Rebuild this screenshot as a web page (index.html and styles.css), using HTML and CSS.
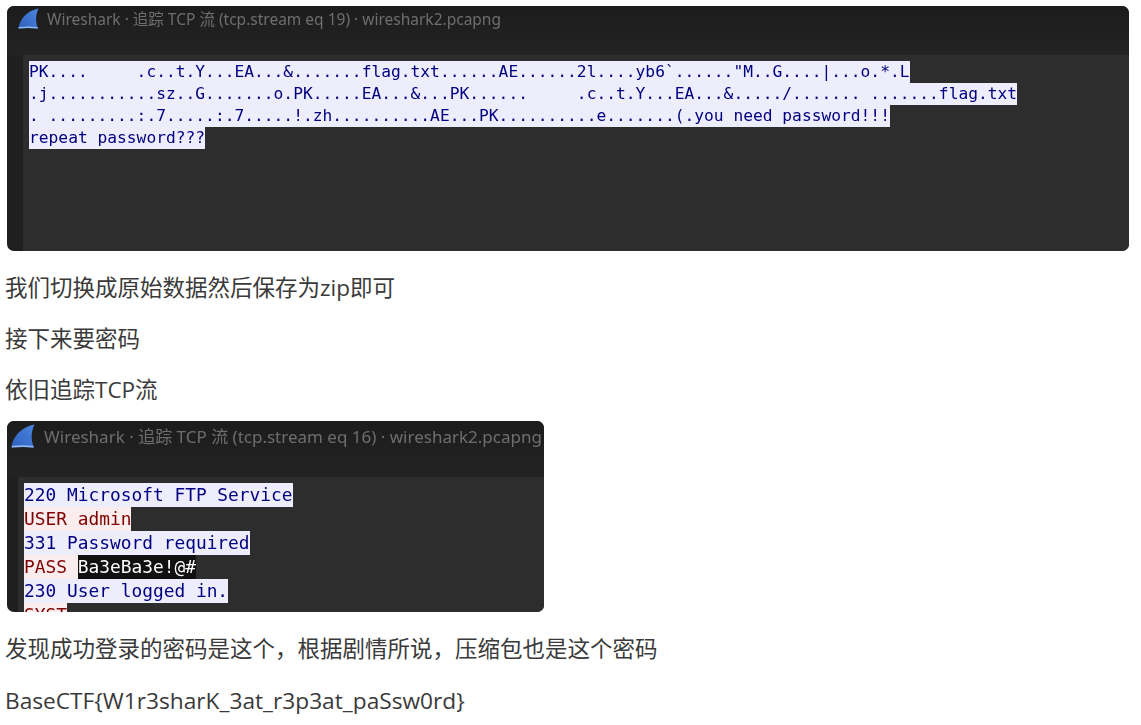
FILE: index.html
```html
<!DOCTYPE html>
<html lang="zh-CN">
<head>
<meta charset="utf-8">
<title>BaseCTF</title>
<link rel="stylesheet" href="styles.css">
</head>
<body>
<article class="post">
  <figure class="window window-wide">
    <div class="titlebar">
      <svg class="fin" viewBox="0 0 22 22" aria-hidden="true">
        <defs>
          <linearGradient id="fin-a" x1="0" y1="1" x2="1" y2="0">
            <stop offset="0" stop-color="#2f5fbe"/>
            <stop offset="1" stop-color="#4a86df"/>
          </linearGradient>
        </defs>
        <path d="M0.5 21.5C1.5 12 9 3 21.5 0.5 18.5 7 18 14 21 21.5 14 20.8 7 20.8 0.5 21.5Z" fill="url(#fin-a)"/>
        <path d="M0.5 21.5C7 20.8 14 20.8 21 21.5L20.4 20C14 19.2 7 19.2 0.8 20Z" fill="#8fb8ee"/>
      </svg>
      <span class="title">Wireshark · 追踪 TCP 流 (tcp.stream eq 19) · wireshark2.pcapng</span>
    </div>
    <div class="pane">
      <div class="stream">
<span class="line srv">PK....     .c..t.Y...EA...&amp;.......flag.txt......AE......2l....yb6`......"M..G....|...o.*.L</span>
<span class="line srv">.j...........sz..G.......o.PK.....EA...&amp;...PK......     .c..t.Y...EA...&amp;...../....... .......flag.txt</span>
<span class="line srv">. .........:.7.....:.7.....!.zh..........AE...PK..........e.......(.you need password!!!</span>
<span class="line srv">repeat password???</span>
      </div>
    </div>
  </figure>

  <p class="para">我们切换成原始数据然后保存为zip即可</p>
  <p class="para">接下来要密码</p>
  <p class="para">依旧追踪TCP流</p>

  <figure class="window window-small">
    <div class="titlebar">
      <svg class="fin" viewBox="0 0 22 22" aria-hidden="true">
        <path d="M0.5 21.5C1.5 12 9 3 21.5 0.5 18.5 7 18 14 21 21.5 14 20.8 7 20.8 0.5 21.5Z" fill="url(#fin-a)"/>
        <path d="M0.5 21.5C7 20.8 14 20.8 21 21.5L20.4 20C14 19.2 7 19.2 0.8 20Z" fill="#8fb8ee"/>
      </svg>
      <span class="title">Wireshark · 追踪 TCP 流 (tcp.stream eq 16) · wireshark2.pcapng</span>
    </div>
    <div class="pane">
      <div class="stream">
<span class="line srv">220 Microsoft FTP Service</span>
<span class="line cli">USER admin</span>
<span class="line srv">331 Password required</span>
<span class="line cli">PASS <mark class="secret">Ba3eBa3e!@#</mark></span>
<span class="line srv">230 User logged in.</span>
<span class="line cli">SYST</span>
      </div>
    </div>
  </figure>

  <p class="para para-after">发现成功登录的密码是这个，根据剧情所说，压缩包也是这个密码</p>
  <p class="para para-latin">BaseCTF{W1r3sharK_3at_r3p3at_paSsw0rd}</p>
</article>
</body>
</html>
```

FILE: styles.css
```css
* { box-sizing: border-box; }

html, body {
  margin: 0;
  padding: 0;
  background: #ffffff;
}

body {
  width: 1141px;
  height: 725px;
  overflow: hidden;
}

.post {
  padding: 6px 12px 0 5px;
  font-family: "Open Sans", "Noto Sans CJK SC", sans-serif;
  color: #3a3a3a;
}

.window {
  margin: 0 0 0 2px;
  overflow: hidden;
  border-radius: 7px;
  background: #1f1f1f;
  display: flex;
  flex-direction: column;
  filter: blur(0.3px);
}

.window-wide { width: 1122px; height: 245px; }
.window-small { width: 537px; height: 191px; margin-top: 17px; }

.titlebar {
  display: flex;
  align-items: flex-start;
  flex: none;
  background: linear-gradient(#1c1c1c, #232323);
}

.window-wide .titlebar { height: 49px; padding: 2px 0 0 11px; gap: 8px; }
.window-small .titlebar { height: 56px; padding: 3px 0 0 4px; gap: 9px; }

.fin { flex: none; }
.window-wide .fin { width: 21px; height: 21px; }
.window-small .fin { width: 24px; height: 24px; }

.title {
  color: #6e6e6e;
  font-family: "Noto Sans", "Noto Sans CJK SC", sans-serif;
  white-space: nowrap;
}

.window-wide .title { font-size: 15.5px; line-height: 22px; }
.window-small .title { font-size: 17px; line-height: 24px; padding-top: 1px; }

.pane {
  flex: 1;
  min-height: 0;
  background: #2d2d2d;
}

.window-wide .pane { margin-left: 16px; padding: 6px 0 0 6px; }
.window-small .pane { margin-left: 11px; padding: 6px 0 0 6px; }

.stream {
  display: flex;
  flex-direction: column;
  align-items: flex-start;
  font-family: "DejaVu Sans Mono", monospace;
  white-space: pre;
}

.window-wide .stream { font-size: 16.25px; line-height: 22px; }
.window-small .stream { font-size: 17.85px; line-height: 24px; }

.line { display: block; flex: none; }
.srv { background: #ededfb; color: #000080; }
.cli { background: #fbeded; color: #7f0000; }

.secret {
  display: inline-block;
  background: #111111;
  color: #ffffff;
}

.para {
  margin: 0;
  padding-top: 22px;
  font-size: 22.5px;
  line-height: 30px;
  height: 51px;
  white-space: nowrap;
}

.para-after { height: 52px; }
.para-latin { font-size: 22.7px; }
```
